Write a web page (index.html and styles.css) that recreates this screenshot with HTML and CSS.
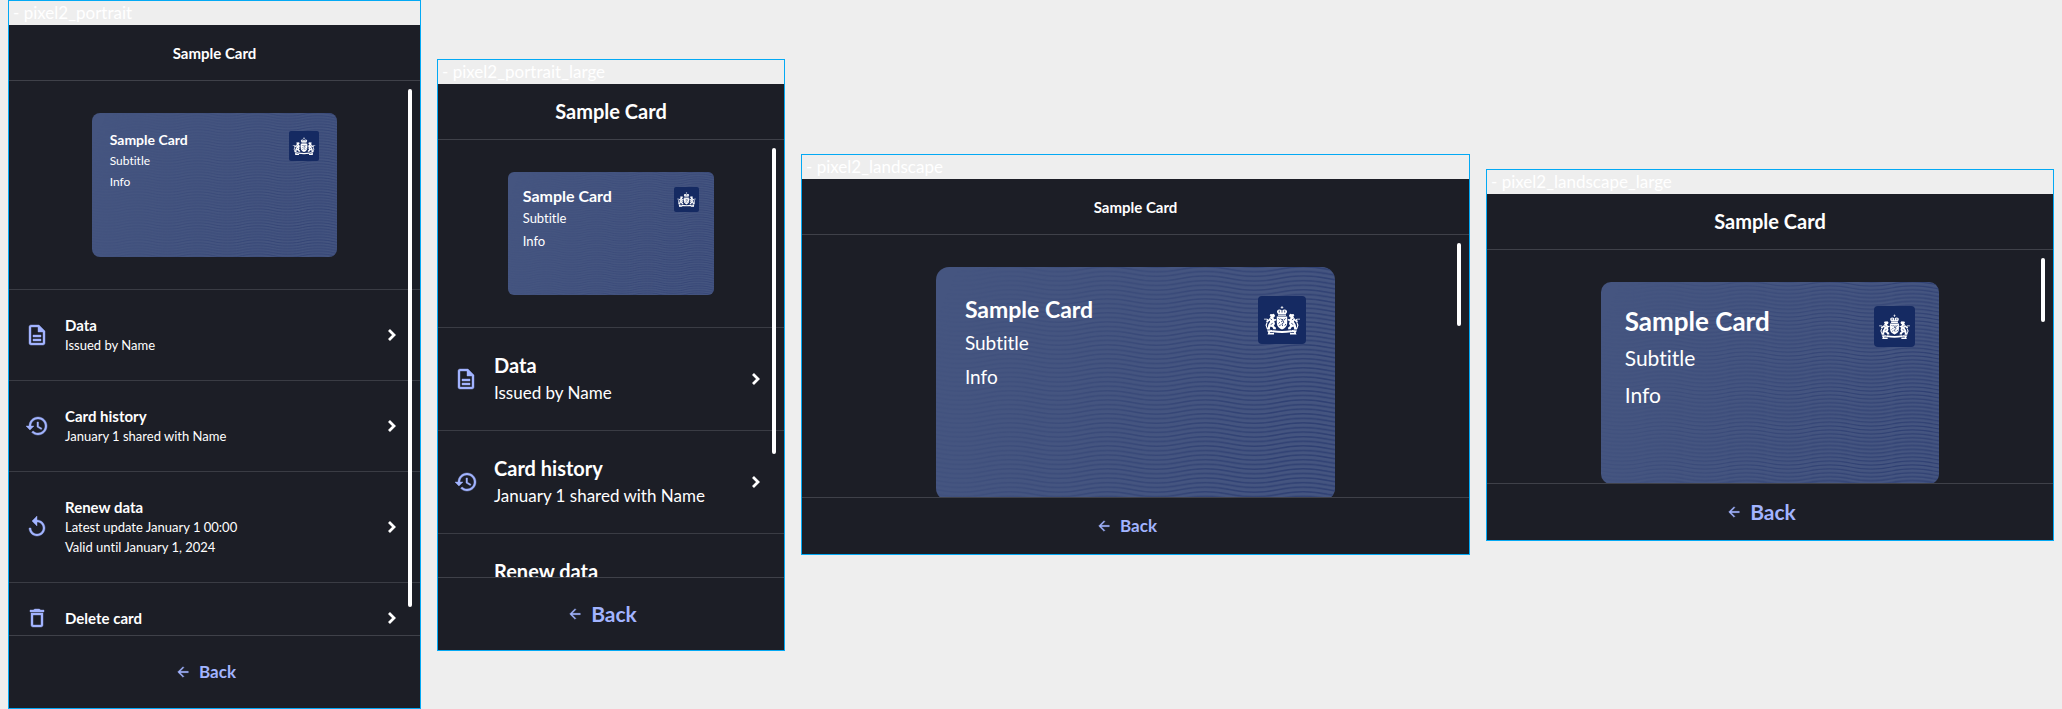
FILE: index.html
```html
<!DOCTYPE html>
<html lang="en">
<head>
<meta charset="utf-8">
<title>Sample Card</title>
<link rel="stylesheet" href="styles.css">
</head>
<body>
<svg class="sprite" aria-hidden="true">
  <defs>
    <linearGradient id="fade" x1="0" y1="0" x2="1" y2="0.25">
      <stop offset="0.05" stop-color="#fff" stop-opacity="0"/>
      <stop offset="0.5" stop-color="#fff" stop-opacity="0.5"/>
      <stop offset="1" stop-color="#fff" stop-opacity="1"/>
    </linearGradient>
    <mask id="fade-mask"><rect width="400" height="240" fill="url(#fade)"/></mask>
    <pattern id="waves" width="98" height="4.6" patternUnits="userSpaceOnUse">
      <g fill="none" stroke="#2f4072" stroke-width="1.4">
        <path d="M-24 -4.8C1 -4.8 0 .2 25 .2S49 -4.8 74 -4.8S98 .2 123 .2"/>
        <path d="M-24 -.2C1 -.2 0 4.8 25 4.8S49 -.2 74 -.2S98 4.8 123 4.8"/>
        <path d="M-24 4.4C1 4.4 0 9.4 25 9.4S49 4.4 74 4.4S98 9.4 123 9.4"/>
      </g>
    </pattern>
  </defs>
  <symbol id="card-waves" viewBox="0 0 400 240" preserveAspectRatio="xMinYMin slice">
    <rect width="400" height="240" fill="url(#waves)" mask="url(#fade-mask)"/>
  </symbol>
  <symbol id="emblem" viewBox="0 0 48 48">
    <g fill="#fff">
      <path d="M23.6 10h.8v1.100h.9v.7h-.9v1h-.8v-1h-.9v-.7h.9z"/>
      <path d="M19.300 14.400c1-1.400 3-1.200 4.700-.2c1.700-1 3.700-1.200 4.700.2c.8 1.300 0 2.600-.9 3.600h-7.600c-.9-1-1.700-2.300-.9-3.600z"/>
      <path d="M20 18.500h8v1.300h-8z"/>
      <path d="M18.800 20.500h10.400v6.500c0 3.400-2.200 5.200-5.200 6.500c-3-1.300-5.200-3.100-5.200-6.500z"/>
      <g id="lion">
        <path d="M11.600 19.300l1-1.300l1.600.2l1.500-.4l1.300 1.500l-.5 1.600l-1.300.8l1.200 1.600l1.800-.2v1.500l-2 .5l.8 2.600l-1.200 2.200l1.900 1.400l.3 2h-2.600l-.7-1.700l-2-1.200l-.9 1.600l.5 1.600h-3.200l-.6-1.300l1.200-.4l.6-3.200l1.600-2.600l.2-1.700l-1.700 1l-.9 1.300l-1.300-.8l.3-1.500l1.900-.7l1.600-1.900l.6-1.600z"/>
        <path d="M6 22.700h3.200l1.200.9l-.8.6l-1-.6H6zM8.500 26.500l-1 2.700l1 2.800l1.500 1.500l.4-.8l-1.200-1.600l-.4-1.900l.7-2.200z"/>
        <path d="M9 34.500l5-.4l2.500 1.800h-4.400l-.3.900h4.200v1.700H9.500l.8-1.700z"/>
      </g>
      <use href="#lion" transform="matrix(-1 0 0 1 48 0)"/>
      <path d="M15 34.300c6 1 12 1 18 0v2c-6 1-12 1-18 0z"/>
    </g>
    <g fill="none" stroke="#152a62" stroke-width=".8">
      <path d="M21.300 14.500v2M24 14v2.600M26.700 14.500v2"/>
      <path d="M20.500 22.300l1.500 1.500M27.500 22.300l-1.500 2M20.600 27.500l1.200-1.300M22.800 22.500l1 1.300l1.500-.6M23 26l2-1.500l.8 2l-1.900 1.400l.8 2.200M21.300 29.700l1.500-.8M27.800 28l-1 1.700M12.500 22.600l1.500 1.500M12.700 28.600l2-1.300M35.500 22.600l-1.500 1.500M35.300 28.600l-2-1.300"/>
    </g>
  </symbol>
  <symbol id="i-doc" viewBox="0 0 24 24"><path d="M8 16h8v2H8zm0-4h8v2H8zm6-10H6c-1.100 0-2 .9-2 2v16c0 1.100.89 2 1.990 2H18c1.100 0 2-.9 2-2V8l-6-6zm4 18H6V4h7v5h5v11z"/></symbol>
  <symbol id="i-history" viewBox="0 0 24 24"><path d="M13 3c-4.970 0-9 4.030-9 9H1l3.890 3.890.07.140L9 12H6c0-3.870 3.130-7 7-7s7 3.130 7 7-3.130 7-7 7c-1.930 0-3.680-.79-4.940-2.060l-1.420 1.420C8.270 19.990 10.510 21 13 21c4.970 0 9-4.030 9-9s-4.030-9-9-9zm-1 5v5l4.280 2.540.72-1.210-3.500-2.080V8H12z"/></symbol>
  <symbol id="i-replay" viewBox="0 0 24 24"><path d="M12 5V1L7 6l5 5V7c3.310 0 6 2.690 6 6s-2.690 6-6 6-6-2.690-6-6H4c0 4.420 3.580 8 8 8s8-3.580 8-8-3.580-8-8-8z"/></symbol>
  <symbol id="i-delete" viewBox="0 0 24 24"><path d="M6 19c0 1.100.9 2 2 2h8c1.100 0 2-.9 2-2V7H6v12zM8 9h8v10H8V9zm7.500-5l-1-1h-5l-1 1H5v2h14V4h-3.500z"/></symbol>
  <symbol id="i-chevron" viewBox="0 0 24 24"><path d="M9 7l5 5l-5 5" fill="none" stroke="currentColor" stroke-width="2.800"/></symbol>
  <symbol id="i-back" viewBox="0 0 24 24"><path d="M20 11H7.830l5.590-5.590L12 4l-8 8 8 8 1.410-1.410L7.830 13H20v-2z"/></symbol>
</svg>

<main class="board">
  <section class="frame portrait">
    <p class="label">- pixel2_portrait</p>
    <div class="screen">
      <header class="header"><h1 class="header-title">Sample Card</h1></header>
      <div class="viewport">
        <div class="hero">
          <article class="card">
            <svg class="card-art" aria-hidden="true"><use href="#card-waves"/></svg>
            <div class="card-text"><h2 class="card-title">Sample Card</h2><p class="card-line">Subtitle</p><p class="card-line">Info</p></div>
            <svg class="card-logo" aria-hidden="true"><use href="#emblem"/></svg>
          </article>
        </div>
        <button class="row" type="button">
          <svg class="icon" aria-hidden="true"><use href="#i-doc"/></svg>
          <span class="row-text"><strong class="row-title">Data</strong><span>Issued by Name</span></span>
          <svg class="icon chevron" aria-hidden="true"><use href="#i-chevron"/></svg>
        </button>
        <button class="row" type="button">
          <svg class="icon" aria-hidden="true"><use href="#i-history"/></svg>
          <span class="row-text"><strong class="row-title">Card history</strong><span>January 1 shared with Name</span></span>
          <svg class="icon chevron" aria-hidden="true"><use href="#i-chevron"/></svg>
        </button>
        <button class="row" type="button">
          <svg class="icon" aria-hidden="true"><use href="#i-replay"/></svg>
          <span class="row-text"><strong class="row-title">Renew data</strong><span>Latest update January 1 00:00</span><span>Valid until January 1, 2024</span></span>
          <svg class="icon chevron" aria-hidden="true"><use href="#i-chevron"/></svg>
        </button>
        <button class="row" type="button">
          <svg class="icon" aria-hidden="true"><use href="#i-delete"/></svg>
          <span class="row-text"><strong class="row-title">Delete card</strong></span>
          <svg class="icon chevron" aria-hidden="true"><use href="#i-chevron"/></svg>
        </button>
        <div class="thumb"></div>
      </div>
      <footer class="footer"><button class="back" type="button"><svg class="back-icon" aria-hidden="true"><use href="#i-back"/></svg>Back</button></footer>
    </div>
  </section>

  <section class="frame portrait-large">
    <p class="label">- pixel2_portrait_large</p>
    <div class="screen">
      <header class="header"><h1 class="header-title">Sample Card</h1></header>
      <div class="viewport">
        <div class="hero">
          <article class="card">
            <svg class="card-art" aria-hidden="true"><use href="#card-waves"/></svg>
            <div class="card-text"><h2 class="card-title">Sample Card</h2><p class="card-line">Subtitle</p><p class="card-line">Info</p></div>
            <svg class="card-logo" aria-hidden="true"><use href="#emblem"/></svg>
          </article>
        </div>
        <button class="row" type="button">
          <svg class="icon" aria-hidden="true"><use href="#i-doc"/></svg>
          <span class="row-text"><strong class="row-title">Data</strong><span>Issued by Name</span></span>
          <svg class="icon chevron" aria-hidden="true"><use href="#i-chevron"/></svg>
        </button>
        <button class="row" type="button">
          <svg class="icon" aria-hidden="true"><use href="#i-history"/></svg>
          <span class="row-text"><strong class="row-title">Card history</strong><span>January 1 shared with Name</span></span>
          <svg class="icon chevron" aria-hidden="true"><use href="#i-chevron"/></svg>
        </button>
        <button class="row" type="button">
          <span class="icon"></span>
          <span class="row-text"><strong class="row-title">Renew data</strong></span>
        </button>
        <div class="thumb"></div>
      </div>
      <footer class="footer"><button class="back" type="button"><svg class="back-icon" aria-hidden="true"><use href="#i-back"/></svg>Back</button></footer>
    </div>
  </section>

  <section class="frame landscape">
    <p class="label">- pixel2_landscape</p>
    <div class="screen">
      <header class="header"><h1 class="header-title">Sample Card</h1></header>
      <div class="viewport">
        <div class="hero">
          <article class="card">
            <svg class="card-art" aria-hidden="true"><use href="#card-waves"/></svg>
            <div class="card-text"><h2 class="card-title">Sample Card</h2><p class="card-line">Subtitle</p><p class="card-line">Info</p></div>
            <svg class="card-logo" aria-hidden="true"><use href="#emblem"/></svg>
          </article>
        </div>
        <div class="thumb"></div>
      </div>
      <footer class="footer"><button class="back" type="button"><svg class="back-icon" aria-hidden="true"><use href="#i-back"/></svg>Back</button></footer>
    </div>
  </section>

  <section class="frame landscape-large">
    <p class="label">- pixel2_landscape_large</p>
    <div class="screen">
      <header class="header"><h1 class="header-title">Sample Card</h1></header>
      <div class="viewport">
        <div class="hero">
          <article class="card">
            <svg class="card-art" aria-hidden="true"><use href="#card-waves"/></svg>
            <div class="card-text"><h2 class="card-title">Sample Card</h2><p class="card-line">Subtitle</p><p class="card-line">Info</p></div>
            <svg class="card-logo" aria-hidden="true"><use href="#emblem"/></svg>
          </article>
        </div>
        <div class="thumb"></div>
      </div>
      <footer class="footer"><button class="back" type="button"><svg class="back-icon" aria-hidden="true"><use href="#i-back"/></svg>Back</button></footer>
    </div>
  </section>
</main>
</body>
</html>
```
FILE: styles.css
```css
* { box-sizing: border-box; }

body {
  margin: 0;
  background: #eeeeee;
  color: #ffffff;
  font-family: Lato, "Open Sans", sans-serif;
  font-variant-ligatures: none;
}

h1, h2, p { margin: 0; }

.sprite { position: absolute; width: 0; height: 0; }

.board {
  display: grid;
  grid-template-columns: 413fr 348fr 669fr 568fr;
  gap: 16px;
  align-items: center;
  min-height: 100vh;
  padding: 0 8px;
}

.frame { border: 1px solid #03a9f4; min-width: 0; }

.portrait {
  --view: 554px; --thumb: 518px; --foot: 73px;
  --head-size: 15px; --back-size: 17px;
  --row-size: 13px; --row-title: 15px; --row-line: 20px; --row-pad: 25px;
  --pad: 18px; --ratio: 246 / 144; --radius: 8px; --logo: 30px; --logo-radius: 2px;
  --title: 14px; --title-line: 17px; --text: 12px; --text-line: 17px; --gap: 4px;
}

.portrait-large {
  --view: 437px; --thumb: 306px; --foot: 73px;
  --head-size: 20px; --back-size: 21px;
  --row-size: 17px; --row-title: 20px; --row-line: 27px; --row-pad: 24px;
  --pad: 15px; --ratio: 207 / 124; --radius: 6px; --logo: 25px; --logo-radius: 2px;
  --title: 16px; --title-line: 18px; --text: 13px; --text-line: 19px; --gap: 4px;
}

.landscape {
  --view: 262px; --thumb: 83px; --foot: 57px;
  --head-size: 15px; --back-size: 17px;
  --pad: 29px; --ratio: 400 / 234; --radius: 13px; --logo: 48px; --logo-radius: 4px;
  --title: 23px; --title-line: 27px; --text: 19px; --text-line: 28px; --gap: 6px;
}

.landscape-large {
  --view: 233px; --thumb: 64px; --foot: 57px;
  --head-size: 20px; --back-size: 21px;
  --pad: 24px; --ratio: 340 / 203; --radius: 10px; --logo: 41px; --logo-radius: 4px;
  --title: 26px; --title-line: 31px; --text: 21px; --text-line: 32px; --gap: 5px;
}

.label {
  height: 24px;
  padding-left: 4px;
  font-size: 17px;
  line-height: 23px;
  white-space: nowrap;
}

.screen { background: #1c1e26; }

.header {
  display: flex;
  align-items: center;
  justify-content: center;
  height: 56px;
  border-bottom: 1px solid #3f4149;
}

.header-title { font-size: var(--head-size); line-height: 28px; }

.viewport {
  position: relative;
  height: var(--view);
  overflow: hidden;
}

.hero { display: flex; justify-content: center; padding: 32px 0; }

.card {
  position: relative;
  display: flex;
  align-items: flex-start;
  justify-content: space-between;
  width: calc(60% - 1px);
  aspect-ratio: var(--ratio);
  padding: var(--pad);
  border-radius: var(--radius);
  overflow: hidden;
  background: #455580;
}

.card-art { position: absolute; inset: 0; width: 100%; height: 100%; }

.card-text {
  position: relative;
  display: flex;
  flex-direction: column;
  gap: var(--gap);
}

.card-title { font-size: var(--title); line-height: var(--title-line); }

.card-line { font-size: var(--text); line-height: var(--text-line); }

.card-logo {
  position: relative;
  width: var(--logo);
  height: var(--logo);
  border-radius: var(--logo-radius);
  background: #152a62;
}

.row {
  display: flex;
  align-items: center;
  gap: 16px;
  width: 100%;
  padding: var(--row-pad) 16px;
  border: 0;
  border-top: 1px solid #3a3c44;
  background: none;
  color: inherit;
  font: inherit;
  font-size: var(--row-size);
  line-height: var(--row-line);
  text-align: left;
}

.row-text { display: flex; flex: 1; flex-direction: column; }

.row-title { font-size: var(--row-title); }

.icon {
  flex: none;
  width: 24px;
  height: 24px;
  margin: -2px 0;
  fill: #a2b4ff;
  stroke: #a2b4ff;
  stroke-width: 0.4;
}

.chevron { color: #ffffff; }

.thumb {
  position: absolute;
  top: 8px;
  right: 8px;
  width: 4px;
  height: var(--thumb);
  border-radius: 2px;
  background: #ffffff;
}

.footer {
  display: flex;
  align-items: center;
  justify-content: center;
  height: var(--foot);
  border-top: 1px solid #3f4149;
}

.back {
  display: flex;
  align-items: center;
  gap: 8px;
  padding: 0 18px 0 0;
  border: 0;
  background: none;
  color: #a2b4ff;
  font: inherit;
  font-size: var(--back-size);
  font-weight: 700;
  line-height: 28px;
}

.back-icon {
  width: 16px;
  height: 16px;
  fill: currentColor;
  stroke: currentColor;
  stroke-width: 0.5;
}
```
